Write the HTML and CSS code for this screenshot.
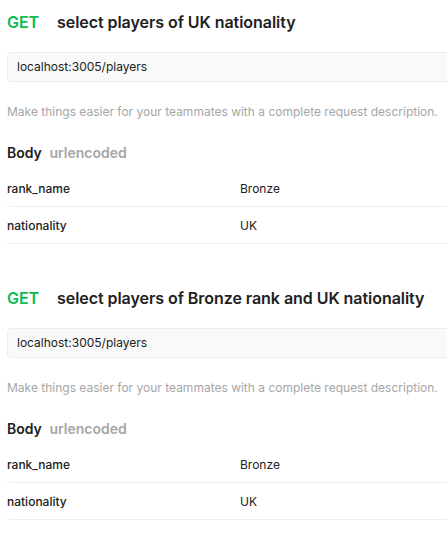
FILE: index.html
```html
<!DOCTYPE html>
<html>
<head>
<meta charset="utf-8">
<link rel="stylesheet" href="styles.css">
</head>
<body>
<div class="page">
  <section class="request">
    <h2 class="title"><span class="method">GET</span><span class="name">select players of UK nationality</span></h2>
    <div class="url">localhost:3005/players</div>
    <p class="desc">Make things easier for your teammates with a complete request description.</p>
    <h3 class="body-head">Body <span class="body-type">urlencoded</span></h3>
    <div class="params">
      <div class="row"><div class="key">rank_name</div><div class="val">Bronze</div></div>
      <div class="row"><div class="key">nationality</div><div class="val">UK</div></div>
    </div>
  </section>
  <section class="request">
    <h2 class="title"><span class="method">GET</span><span class="name">select players of Bronze rank and UK nationality</span></h2>
    <div class="url">localhost:3005/players</div>
    <p class="desc">Make things easier for your teammates with a complete request description.</p>
    <h3 class="body-head">Body <span class="body-type">urlencoded</span></h3>
    <div class="params">
      <div class="row"><div class="key">rank_name</div><div class="val">Bronze</div></div>
      <div class="row"><div class="key">nationality</div><div class="val">UK</div></div>
    </div>
  </section>
</div>
</body>
</html>
```
FILE: styles.css
```css
html, body {
  margin: 0;
  padding: 0;
  background: #ffffff;
}
body {
  font-family: Inter, "Noto Sans", sans-serif;
  color: #212121;
  overflow: hidden;
}
.page {
  width: 470px;
  padding: 0 0 0 7px;
}
.request {
  height: 276px;
}
.title {
  margin: 0;
  padding-top: 11px;
  height: 22px;
  line-height: 22px;
  font-size: 16px;
  font-weight: 600;
  letter-spacing: -0.05px;
  display: flex;
}
.method {
  color: #0cbb52;
  width: 50px;
}
.name {
  color: #212121;
}
.url {
  margin-top: 19px;
  height: 28px;
  line-height: 28px;
  border: 1px solid #ededed;
  border-radius: 4px;
  background: #f9f9f9;
  padding-left: 9px;
  font-size: 12px;
  color: #212121;
}
.desc {
  margin: 21px 0 0;
  line-height: 18px;
  font-size: 12px;
  color: #a6a6a6;
}
.body-head {
  margin: 23px 0 0;
  font-size: 14px;
  line-height: 18px;
  font-weight: 600;
  color: #212121;
}
.body-type {
  color: #a6a6a6;
  margin-left: 4px;
}
.params {
  margin-top: 8px;
}
.row {
  display: flex;
  height: 36px;
  align-items: center;
  border-bottom: 1px solid #ededed;
  border-radius: 0 0 0 4px;
  font-size: 12px;
}
.key {
  width: 233px;
  font-weight: 500;
  color: #212121;
}
.val {
  color: #212121;
}
```
